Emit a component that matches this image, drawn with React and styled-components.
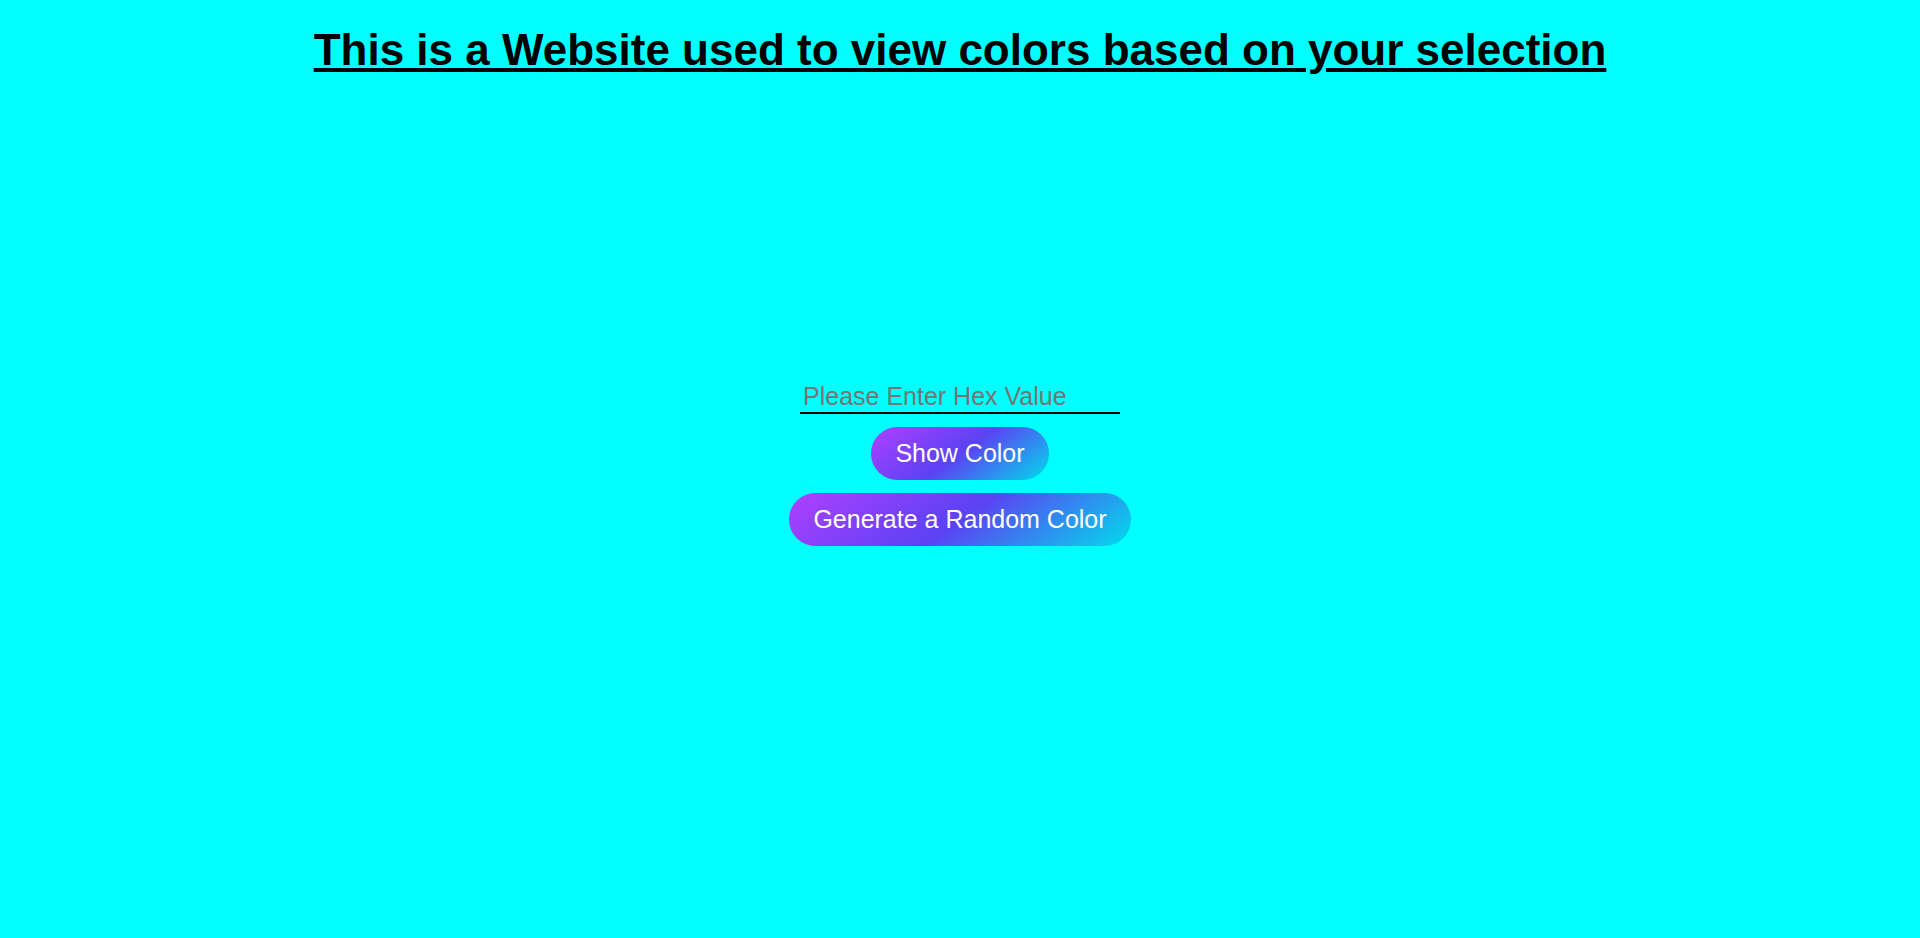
import React, { useState } from 'react';
import styled, { createGlobalStyle } from 'styled-components';

const GlobalStyle = createGlobalStyle`
  body {
    margin: 0;
    background: #00ffff;
    font-family: "Liberation Sans", Arial, sans-serif;
  }
`;

const Page = styled.div`
  min-height: 100vh;
  display: flex;
  flex-direction: column;
  align-items: center;
`;

const Title = styled.h1`
  margin: 25px 0 0;
  font-size: 44px;
  font-weight: 700;
  text-decoration: underline;
  text-align: center;
  color: #000;
`;

const Controls = styled.div`
  display: flex;
  flex-direction: column;
  align-items: center;
  gap: 13px;
  margin-top: 306px;
`;

const HexInput = styled.input`
  width: 320px;
  box-sizing: border-box;
  border: none;
  border-bottom: 2px solid #000;
  background: transparent;
  font-family: inherit;
  font-size: 25px;
  padding: 1px 3px;
  outline: none;

  &::placeholder {
    color: #757575;
  }
`;

const GradientButton = styled.button`
  font-family: inherit;
  font-size: 25px;
  color: #fff;
  border: none;
  border-radius: 27px;
  padding: 12px 24px;
  cursor: pointer;
  background-image: linear-gradient(144deg, #af40ff, #5b42f3 50%, #00ddeb);
`;

const App = () => {
  const [hex, setHex] = useState('');

  const showColor = () => {
    if (hex) document.body.style.background = hex.startsWith('#') ? hex : `#${hex}`;
  };

  const randomColor = () => {
    const value = '#' + Math.floor(Math.random() * 0xffffff).toString(16).padStart(6, '0');
    document.body.style.background = value;
  };

  return (
    <>
      <GlobalStyle />
      <Page>
        <Title>This is a Website used to view colors based on your selection</Title>
        <Controls>
          <HexInput
            placeholder="Please Enter Hex Value"
            value={hex}
            onChange={(e) => setHex(e.target.value)}
          />
          <GradientButton onClick={showColor}>Show Color</GradientButton>
          <GradientButton onClick={randomColor}>Generate a Random Color</GradientButton>
        </Controls>
      </Page>
    </>
  );
};

export default App;
